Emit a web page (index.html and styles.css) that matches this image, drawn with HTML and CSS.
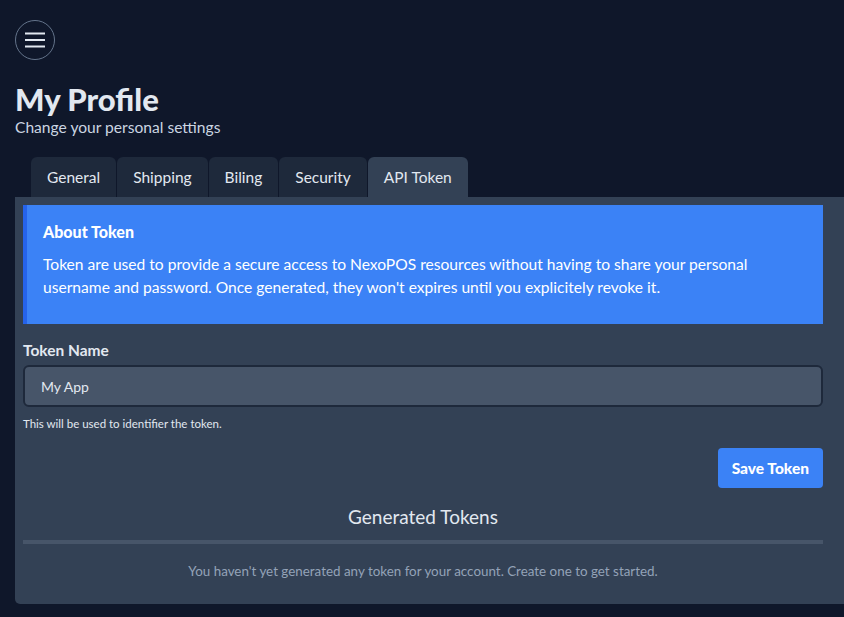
FILE: index.html
```html
<!DOCTYPE html>
<html lang="en">
<head>
<meta charset="utf-8">
<title>My Profile</title>
<link rel="stylesheet" href="styles.css">
</head>
<body>
<div class="page">
  <button class="menu-btn" aria-label="Menu">
    <svg width="20" height="16" viewBox="0 0 20 16" fill="none" stroke="#e2e8f0" stroke-width="2" stroke-linecap="butt">
      <line x1="0" y1="1.5" x2="20" y2="1.5"/>
      <line x1="0" y1="8" x2="20" y2="8"/>
      <line x1="0" y1="14.5" x2="20" y2="14.5"/>
    </svg>
  </button>
  <h1 class="title">My Profile</h1>
  <p class="subtitle">Change your personal settings</p>

  <div class="tabs">
    <div class="tab">General</div>
    <div class="tab">Shipping</div>
    <div class="tab">Biling</div>
    <div class="tab">Security</div>
    <div class="tab active">API Token</div>
  </div>

  <div class="panel">
    <div class="info">
      <h3 class="info-title">About Token</h3>
      <p class="info-text">Token are used to provide a secure access to NexoPOS resources without having to share your personal username and password. Once generated, they won't expires until you explicitely revoke it.</p>
    </div>

    <label class="label">Token Name</label>
    <div class="input">My App</div>
    <p class="help">This will be used to identifier the token.</p>

    <div class="actions">
      <button class="btn">Save Token</button>
    </div>

    <h2 class="section-title">Generated Tokens</h2>
    <div class="divider"></div>
    <p class="empty">You haven't yet generated any token for your account. Create one to get started.</p>
  </div>
</div>
</body>
</html>
```

FILE: styles.css
```css
* { box-sizing: border-box; }
html, body {
  margin: 0;
  padding: 0;
  background: #0f172a;
  overflow: hidden;
}
body {
  font-family: "Lato", "Noto Sans", sans-serif;
  color: #e2e8f0;
}
.page {
  padding: 20px 0 0 15px;
}
.menu-btn {
  width: 40px;
  height: 40px;
  border-radius: 50%;
  border: 1px solid #64748b;
  background: transparent;
  display: flex;
  align-items: center;
  justify-content: center;
  padding: 0;
}
.title {
  margin: 22px 0 0;
  font-size: 31px;
  line-height: 35px;
  font-weight: 900;
  color: #e2e8f0;
}
.subtitle {
  margin: 0;
  font-size: 15.6px;
  line-height: 21px;
  color: #cbd5e1;
}
.tabs {
  display: flex;
  gap: 1px;
  margin: 19px 0 0 16px;
}
.tab {
  height: 40px;
  padding: 0 16px;
  display: flex;
  align-items: center;
  background: #1e293b;
  border-radius: 6px 6px 0 0;
  font-size: 15.5px;
  color: #e2e8f0;
}
.tab.active {
  background: #334155;
}
.panel {
  background: #334155;
  border-radius: 0 0 0 5px;
  padding: 8px 21px 23px 8px;
  width: 829px;
}
.info {
  background: #3b82f6;
  border-left: 4px solid #2563eb;
  padding: 15px 20px 25px 16px;
  color: #ffffff;
}
.info-title {
  margin: 0;
  font-size: 16px;
  line-height: 24px;
  font-weight: 900;
}
.info-text {
  margin: 9px 0 0;
  font-size: 15.6px;
  line-height: 23px;
}
.label {
  display: block;
  margin-top: 16px;
  font-size: 15.5px;
  line-height: 20px;
  font-weight: 700;
  color: #e2e8f0;
}
.input {
  margin-top: 5px;
  height: 42px;
  border: 2px solid #1e293b;
  border-radius: 6px;
  background: #475569;
  padding: 0 16px;
  display: flex;
  align-items: center;
  font-size: 14px;
  color: #e2e8f0;
}
.help {
  margin: 9px 0 0;
  font-size: 11.5px;
  line-height: 16px;
  color: #e2e8f0;
}
.actions {
  display: flex;
  justify-content: flex-end;
  margin-top: 16px;
}
.btn {
  height: 40px;
  padding: 0 14px;
  border: none;
  border-radius: 4px;
  background: #3b82f6;
  color: #ffffff;
  font-family: inherit;
  font-size: 15.5px;
  font-weight: 900;
}
.section-title {
  margin: 15px 0 0;
  text-align: center;
  font-size: 19px;
  line-height: 28px;
  font-weight: 400;
  color: #e2e8f0;
}
.divider {
  margin-top: 9px;
  height: 4px;
  background: #475569;
}
.empty {
  margin: 17px 0 0;
  text-align: center;
  font-size: 13.4px;
  line-height: 20px;
  color: #94a3b8;
}
```
